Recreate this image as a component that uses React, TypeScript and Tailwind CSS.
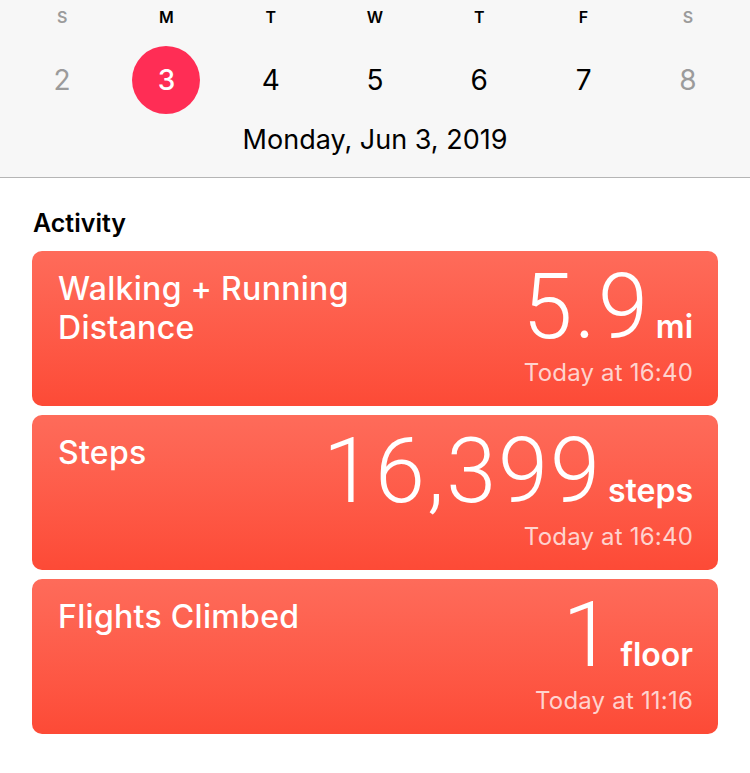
const days = [
  { l: 'S', n: 2, dim: true },
  { l: 'M', n: 3, sel: true },
  { l: 'T', n: 4 },
  { l: 'W', n: 5 },
  { l: 'T', n: 6 },
  { l: 'F', n: 7 },
  { l: 'S', n: 8, dim: true },
];

const cards = [
  { title: ['Walking + Running', 'Distance'], value: '5.9', unit: 'mi', time: 'Today at 16:40' },
  { title: ['Steps'], value: '16,399', unit: 'steps', time: 'Today at 16:40' },
  { title: ['Flights Climbed'], value: '1', unit: 'floor', time: 'Today at 11:16' },
];

export default function App() {
  return (
    <div className="min-h-[773px] w-[750px] bg-white font-['Inter','Roboto','Liberation_Sans',sans-serif] text-black">
      <header className="border-b border-[#b5b5b5] bg-[#f7f7f7] pb-[19px]">
        <div className="grid grid-cols-7 px-[10px] pt-[6px]">
          {days.map((d, i) => (
            <div key={i} className={`h-[22px] text-center text-[16px] font-semibold leading-[22px] ${d.dim ? 'text-[#9b9b9b]' : 'text-black'}`}>
              {d.l}
            </div>
          ))}
        </div>
        <div className="mt-[18px] grid grid-cols-7 px-[10px]">
          {days.map((d, i) => (
            <div key={i} className="flex justify-center">
              <div
                className={`flex h-[68px] w-[68px] items-center justify-center rounded-full text-[28px] ${
                  d.sel ? 'bg-[#ff2d55] font-medium text-white' : d.dim ? 'text-[#9b9b9b]' : 'text-black'
                }`}
              >
                {d.n}
              </div>
            </div>
          ))}
        </div>
        <div className="mt-[8px] h-[36px] text-center text-[27px] leading-[36px]">Monday, Jun 3, 2019</div>
      </header>

      <main className="px-[32px]">
        <h2 className="mt-[30px] h-[30px] pl-px text-[25px] font-semibold leading-[30px]">Activity</h2>
        <div className="mt-[13px] flex flex-col gap-[9px]">
          {cards.map((c, i) => (
            <div
              key={i}
              className="relative h-[155px] rounded-[10px] bg-gradient-to-b from-[#fe6b5a] to-[#fd4a36] px-[26px] text-white"
            >
              <div className="pt-[18px] text-[32px] font-medium leading-[39px] tracking-[0.3px]">
                {c.title.map((t) => (
                  <div key={t}>{t}</div>
                ))}
              </div>
              <div className="absolute right-[25px] top-0 flex flex-col items-end">
                <div className="flex items-baseline">
                  <span className="font-['Roboto',sans-serif] text-[90px] font-light leading-[114px] tracking-[2px]">{c.value}</span>
                  <span className="ml-[6px] text-[32px] font-semibold">{c.unit}</span>
                </div>
                <div className="mt-[-7px] text-[24px] leading-[30px] tracking-[0.2px] text-white/75">{c.time}</div>
              </div>
            </div>
          ))}
        </div>
      </main>
    </div>
  );
}
